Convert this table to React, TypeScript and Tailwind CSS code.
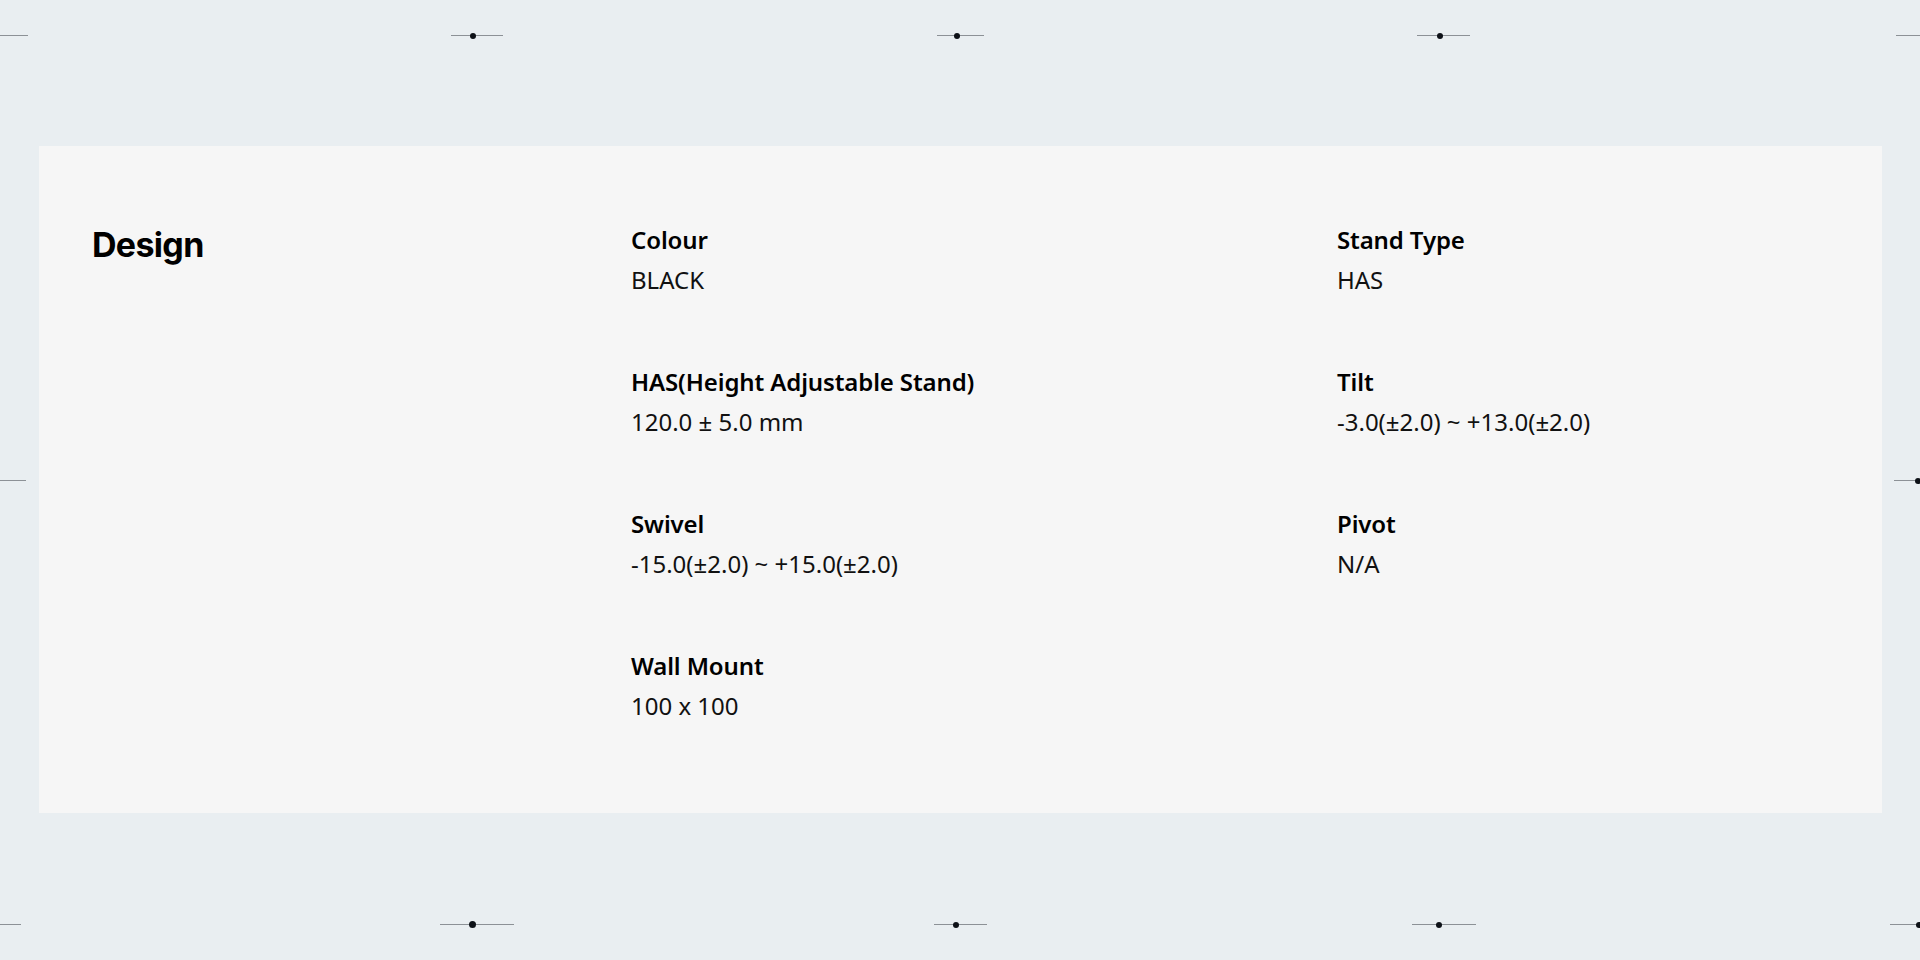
import * as React from "react";

type Spec = { label: string; value: string };

const specs: Spec[][] = [
  [
    { label: "Colour", value: "BLACK" },
    { label: "Stand Type", value: "HAS" },
  ],
  [
    { label: "HAS(Height Adjustable Stand)", value: "120.0 ± 5.0 mm" },
    { label: "Tilt", value: "-3.0(±2.0) ~ +13.0(±2.0)" },
  ],
  [
    { label: "Swivel", value: "-15.0(±2.0) ~ +15.0(±2.0)" },
    { label: "Pivot", value: "N/A" },
  ],
  [{ label: "Wall Mount", value: "100 x 100" }],
];

// registration marks around the sheet: [left, top, width, dot offset or null, dot size]
const marks: [number, number, number, number | null, number][] = [
  [0, 35, 28, null, 0],
  [451, 35, 52, 22, 6],
  [937, 35, 47, 20, 6],
  [1417, 35, 53, 23, 6],
  [1896, 35, 24, null, 0],
  [0, 480, 26, null, 0],
  [1894, 480, 26, 24, 6],
  [0, 924, 21, null, 0],
  [440, 924, 74, 32, 7],
  [934, 924, 53, 22, 6],
  [1412, 924, 64, 27, 6],
  [1890, 924, 30, 29, 6],
];

function Mark({ x, y, w, dot, size }: { x: number; y: number; w: number; dot: number | null; size: number }) {
  return (
    <div className="absolute h-px bg-[#8c9196]" style={{ left: x, top: y, width: w }}>
      {dot !== null && (
        <span
          className="absolute rounded-full bg-[#0d1117]"
          style={{ left: dot - size / 2, top: -size / 2 + 0.5, width: size, height: size }}
        />
      )}
    </div>
  );
}

export default function App() {
  return (
    <div
      className="relative h-[960px] w-[1920px] overflow-hidden bg-[#e9eef1] pt-[146px] pl-[39px]"
      style={{ fontFamily: '"Noto Sans", "Open Sans", sans-serif' }}
    >
      {marks.map(([x, y, w, dot, size], i) => (
        <Mark key={i} x={x} y={y} w={w} dot={dot} size={size} />
      ))}

      <section className="flex h-[667px] w-[1843px] bg-[#f6f6f6] pl-[53px] pt-[74px]">
        <div className="w-[539px] shrink-0 pt-[5px]">
          <h2
            className="text-[34px] font-bold leading-[40px] tracking-[-0.02em] text-black"
            style={{ fontFamily: "Inter, sans-serif" }}
          >
            Design
          </h2>
        </div>
        <div className="flex flex-col gap-[62px]">
          {specs.map((row, i) => (
            <div key={i} className="grid grid-cols-[706px_1fr]">
              {row.map((s) => (
                <div key={s.label} className="flex flex-col">
                  <span className="text-[24px] font-semibold leading-[40px] tracking-[-0.005em] text-black">{s.label}</span>
                  <span className="text-[24px] leading-[40px] text-[#111]">{s.value}</span>
                </div>
              ))}
            </div>
          ))}
        </div>
      </section>
    </div>
  );
}
